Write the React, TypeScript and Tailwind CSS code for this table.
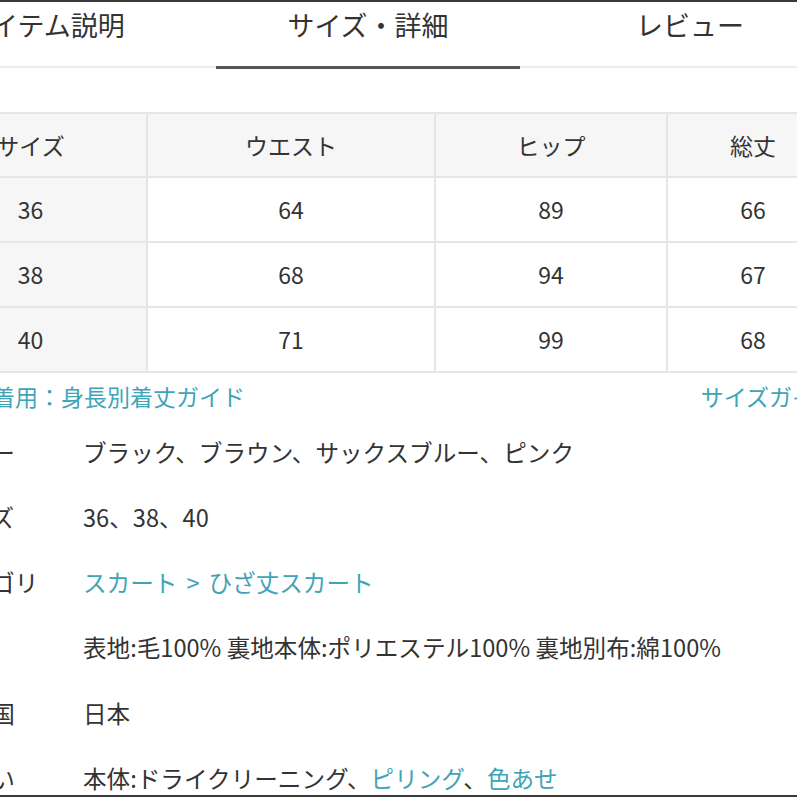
import React from "react";

const font = { fontFamily: '"Noto Sans CJK JP", "Noto Sans", sans-serif' };

const rows = [
  ["36", "64", "89", "66"],
  ["38", "68", "94", "67"],
  ["40", "71", "99", "68"],
];

export default function App() {
  const specs: { label: string; value: React.ReactNode }[] = [
    { label: "カラー", value: "ブラック、ブラウン、サックスブルー、ピンク" },
    { label: "サイズ", value: "36、38、40" },
    {
      label: "カテゴリ",
      value: (
        <span className="text-[#3fa4b8]">
          スカート<span className="mx-[9px]">&gt;</span>ひざ丈スカート
        </span>
      ),
    },
    { label: "素材", value: "表地:毛100% 裏地本体:ポリエステル100% 裏地別布:綿100%" },
    { label: "原産国", value: "日本" },
    {
      label: "取扱い",
      value: (
        <>
          本体:ドライクリーニング、<span className="text-[#3fa4b8]">ピリング</span>、
          <span className="text-[#3fa4b8]">色あせ</span>
        </>
      ),
    },
  ];

  return (
    <div
      className="w-[797px] h-[797px] overflow-hidden bg-white text-[#333] border-t-2 border-b-2 border-[#3a3a3a] flex flex-col"
      style={font}
    >
      {/* Tabs */}
      <div className="flex ml-[-126px] shrink-0">
        <div className="w-[342px] shrink-0 flex flex-col">
          <div className="h-[64px] leading-[46px] text-[27px] text-center">アイテム説明</div>
          <div className="h-[2px] bg-[#ececec]" />
        </div>
        <div className="w-[304px] shrink-0 flex flex-col">
          <div className="h-[64px] leading-[46px] text-[27px] text-center">サイズ・詳細</div>
          <div className="h-[3px] bg-[#555]" />
        </div>
        <div className="w-[340px] shrink-0 flex flex-col">
          <div className="h-[64px] leading-[46px] text-[27px] text-center">レビュー</div>
          <div className="h-[2px] bg-[#ececec]" />
        </div>
      </div>

      {/* Size table */}
      <div className="mt-[43px] ml-[-85px] shrink-0 grid grid-cols-[233px_288px_232px_172px] border-t-2 border-[#e6e6e6] text-[23px]">
        {["サイズ", "ウエスト", "ヒップ", "総丈"].map((h) => (
          <div
            key={h}
            className="h-[64px] flex items-center justify-center border-r-2 border-b-2 border-[#e6e6e6] bg-[#f6f6f6]"
          >
            {h}
          </div>
        ))}
        {rows.map((r) =>
          r.map((v, i) => (
            <div
              key={r[0] + "-" + i}
              className={
                "h-[65px] flex items-center justify-center border-r-2 border-b-2 border-[#e6e6e6] " +
                (i === 0 ? "bg-[#f6f6f6]" : "bg-white")
              }
            >
              {v}
            </div>
          ))
        )}
      </div>

      {/* Guide links */}
      <div className="h-[47px] shrink-0 flex items-center justify-between text-[23px] text-[#3fa4b8]">
        <span className="ml-[-77px] whitespace-nowrap">モデル着用：身長別着丈ガイド</span>
        <span className="whitespace-nowrap mr-[-41px]">サイズガイド</span>
      </div>

      {/* Specs */}
      <div className="flex flex-col text-[23.6px] ml-[-56px]">
        {specs.map((s) => (
          <div key={s.label} className="h-[65.2px] shrink-0 flex items-center whitespace-nowrap">
            <div className="w-[139px] shrink-0">{s.label}</div>
            <div>{s.value}</div>
          </div>
        ))}
      </div>
    </div>
  );
}
